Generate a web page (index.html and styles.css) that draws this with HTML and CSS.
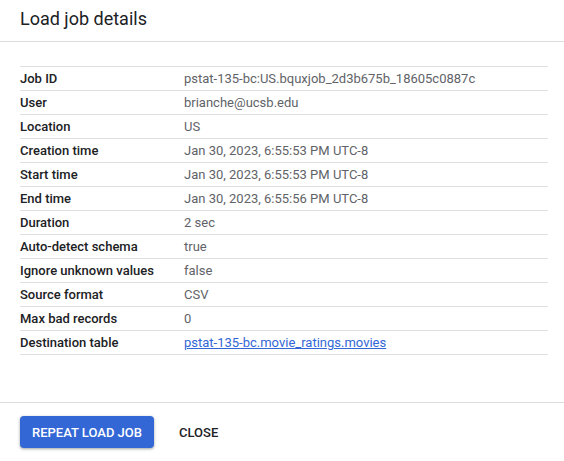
FILE: index.html
```html
<!DOCTYPE html>
<html>
<head>
<meta charset="utf-8">
<link rel="stylesheet" href="styles.css">
</head>
<body>
<div class="dialog">
  <div class="header"><h1 class="title">Load job details</h1></div>
  <div class="content">
    <table class="details">
      <tr><td class="label">Job ID</td><td class="value">pstat-135-bc:US.bquxjob_2d3b675b_18605c0887c</td></tr>
      <tr><td class="label">User</td><td class="value">brianche@ucsb.edu</td></tr>
      <tr><td class="label">Location</td><td class="value">US</td></tr>
      <tr><td class="label">Creation time</td><td class="value">Jan 30, 2023, 6:55:53 PM UTC-8</td></tr>
      <tr><td class="label">Start time</td><td class="value">Jan 30, 2023, 6:55:53 PM UTC-8</td></tr>
      <tr><td class="label">End time</td><td class="value">Jan 30, 2023, 6:55:56 PM UTC-8</td></tr>
      <tr><td class="label">Duration</td><td class="value">2 sec</td></tr>
      <tr><td class="label">Auto-detect schema</td><td class="value">true</td></tr>
      <tr><td class="label">Ignore unknown values</td><td class="value">false</td></tr>
      <tr><td class="label">Source format</td><td class="value">CSV</td></tr>
      <tr><td class="label">Max bad records</td><td class="value">0</td></tr>
      <tr><td class="label">Destination table</td><td class="value"><a class="link" href="#">pstat-135-bc.movie_ratings.movies</a></td></tr>
    </table>
  </div>
  <div class="footer">
    <button class="btn btn-primary">REPEAT LOAD JOB</button>
    <button class="btn btn-text">CLOSE</button>
  </div>
</div>
</body>
</html>
```

FILE: styles.css
```css
html, body {
  margin: 0;
  padding: 0;
  background: #fff;
}
body {
  font-family: Roboto, "Liberation Sans", Arial, sans-serif;
  color: #202124;
  width: 564px;
  height: 461px;
  overflow: hidden;
}
.dialog {
  display: flex;
  flex-direction: column;
  height: 461px;
}
.header {
  height: 42px;
  border-bottom: 1px solid #dadce0;
  box-sizing: border-box;
  padding: 7px 20px 0 20px;
}
.title {
  margin: 0;
  font-size: 18px;
  font-weight: 400;
  line-height: 24px;
  color: #202124;
}
.content {
  padding: 24px 16px 0 20px;
  height: 361px;
  box-sizing: border-box;
  border-bottom: 1px solid #dadce0;
}
.details {
  width: 528px;
  border-collapse: collapse;
  font-size: 13px;
}
.details tr {
  border-top: 1px solid #e0e0e0;
  border-bottom: 1px solid #e0e0e0;
}
.details td {
  height: 23px;
  padding: 0;
  line-height: 23px;
  white-space: nowrap;
}
.label {
  width: 164px;
  font-weight: 500;
  color: #202124;
}
.value {
  color: #5f6368;
}
.link {
  color: #3367d6;
  text-decoration: underline;
}
.footer {
  display: flex;
  align-items: center;
  gap: 8px;
  padding: 13px 20px 0 20px;
}
.btn {
  font-family: Roboto, "Liberation Sans", Arial, sans-serif;
  font-size: 13px;
  font-weight: 500;
  height: 32px;
  border: none;
  border-radius: 4px;
  padding: 0 12px;
  cursor: pointer;
  white-space: nowrap;
}
.btn-primary {
  background: #3367d6;
  color: #fff;
  min-width: 133px;
  box-shadow: 0 1px 2px rgba(60,64,67,0.3), 0 1px 3px 1px rgba(60,64,67,0.15);
}
.btn-text {
  background: transparent;
  color: #202124;
  padding: 0 17px;
}
```
